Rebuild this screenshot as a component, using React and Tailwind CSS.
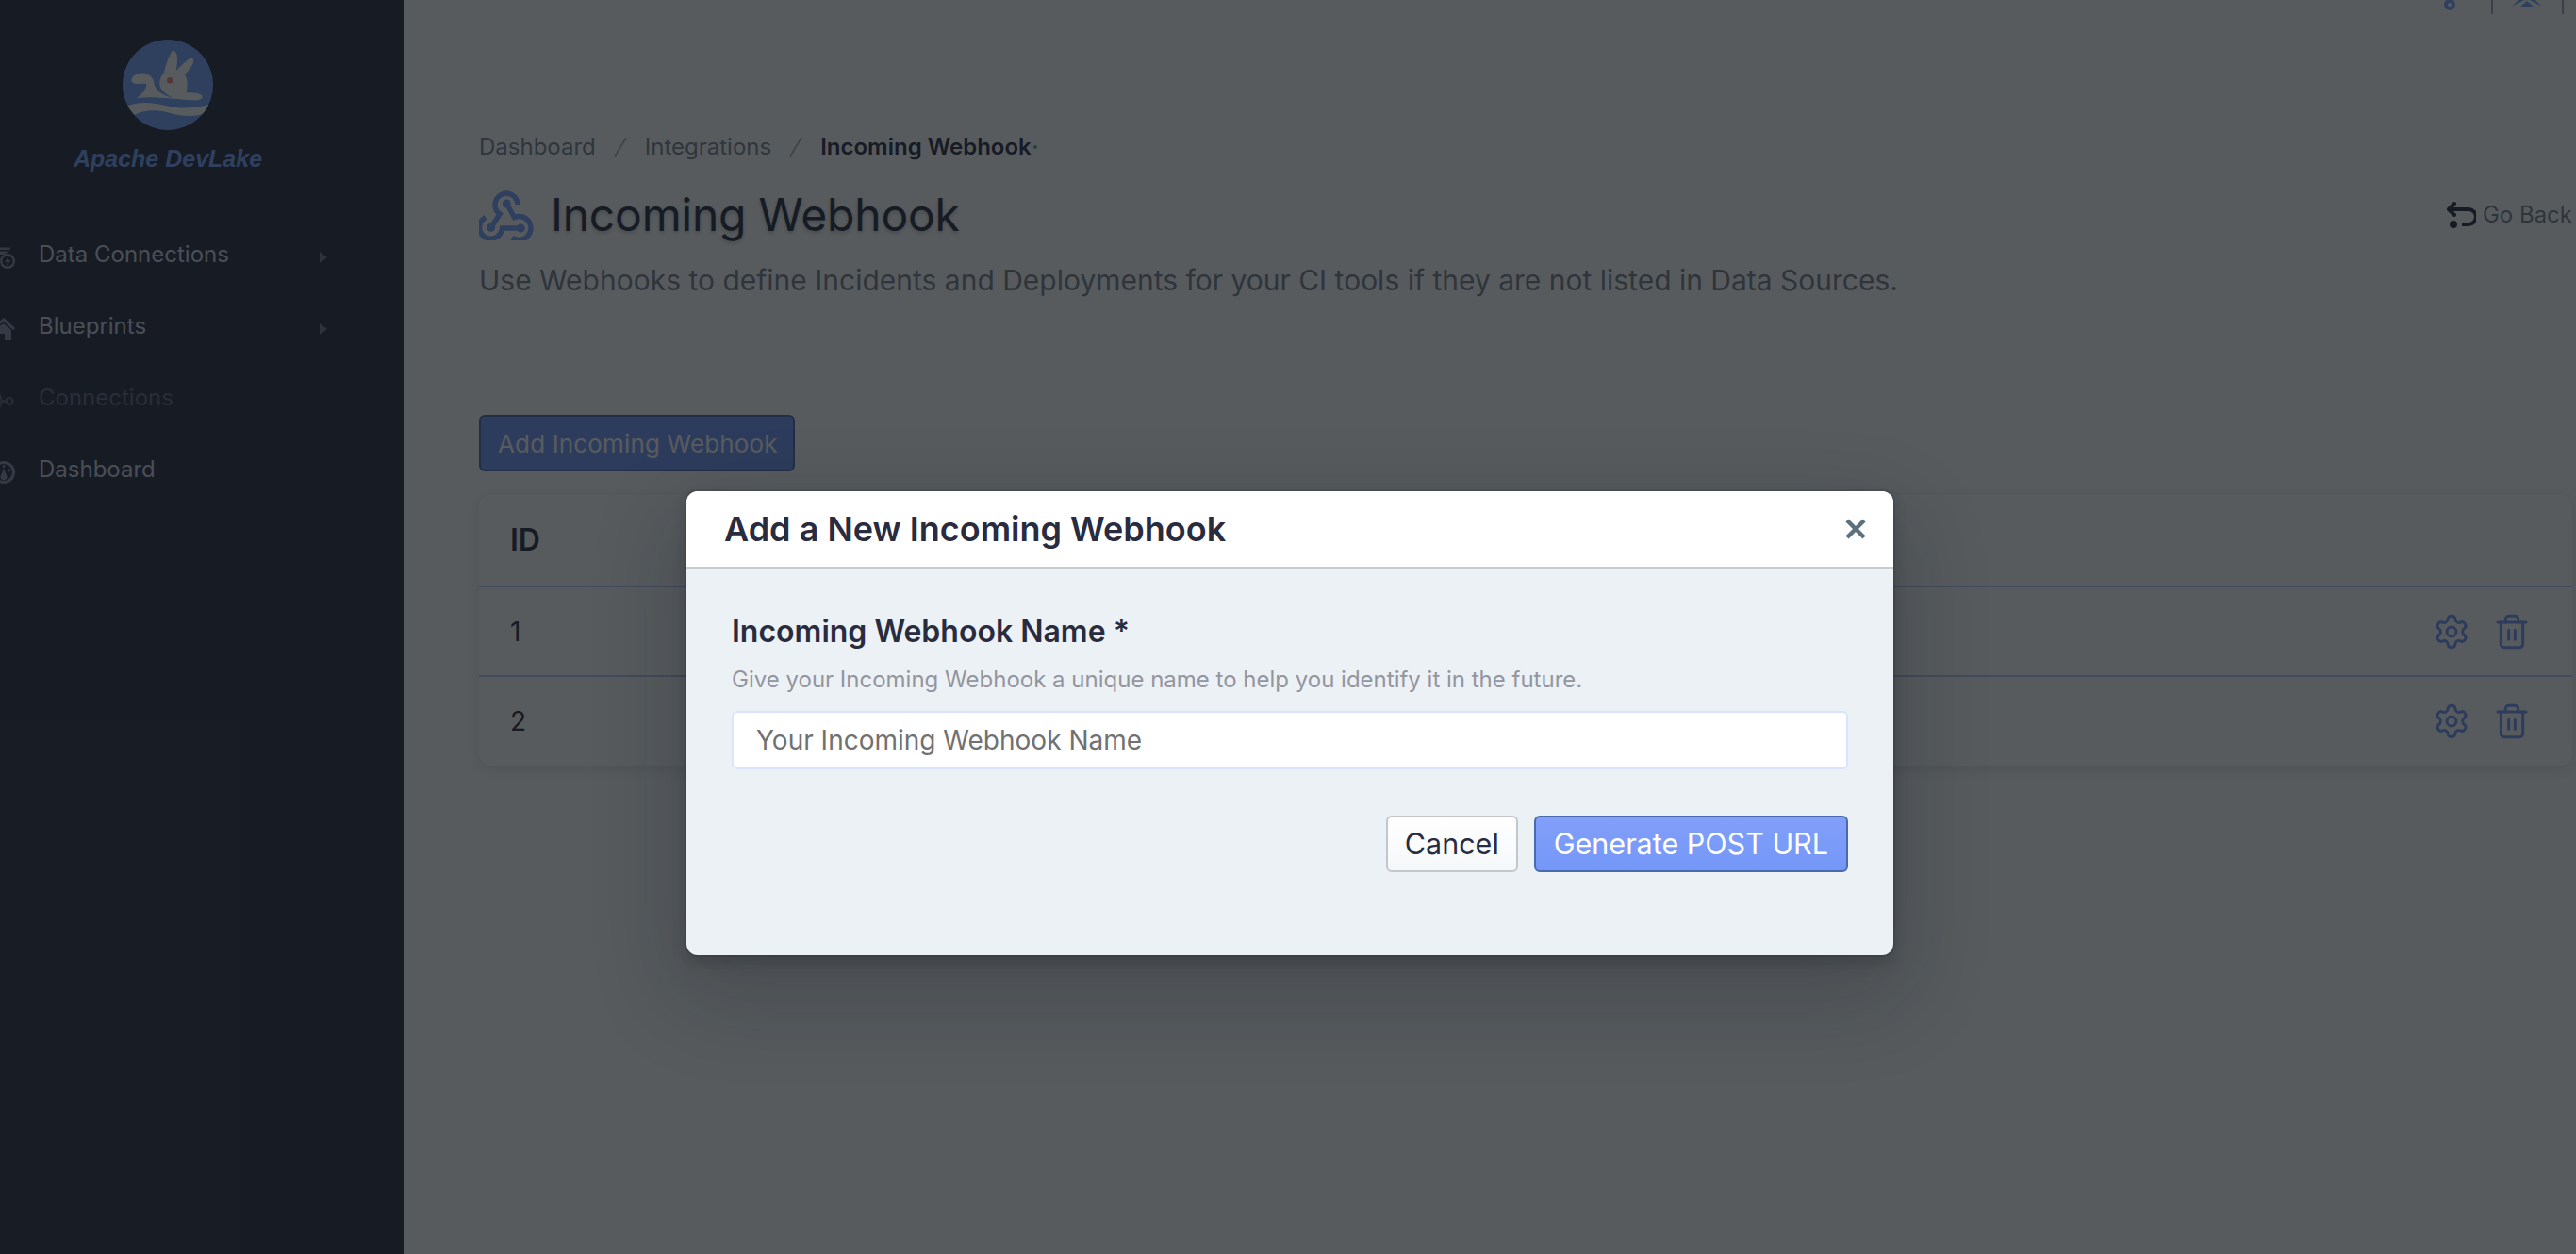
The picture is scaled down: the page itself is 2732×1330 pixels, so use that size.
import React from "react";
import { Settings, Trash2 } from "lucide-react";

const font = { fontFamily: "Inter, 'Liberation Sans', sans-serif" };

function Caret() {
  return (
    <svg width="8" height="12" viewBox="0 0 8 12" className="mt-[6px] shrink-0">
      <path d="M0 0 L8 6 L0 12 Z" fill="currentColor" />
    </svg>
  );
}

function IconData() {
  return (
    <svg width="24" height="24" viewBox="0 0 24 24" className="mt-[6px] shrink-0">
      <path d="M0 1.5h17a2 2 0 0 1 2 2V4H0zM0 5.5h18L12 9H0zM0 10.5h8l-2 4 1 3H0z" fill="currentColor" />
      <circle cx="16" cy="16" r="6.8" fill="none" stroke="currentColor" strokeWidth="2.4" />
      <path d="M17.5 11l-4.5 6h3l-1 4 4.5-6h-3z" fill="currentColor" />
    </svg>
  );
}

function IconHome() {
  return (
    <svg width="24" height="24" viewBox="0 0 24 24" className="mt-[6px] shrink-0">
      <path d="M12 0L24 11l-2 2L12 4 0 13v-3zM2 13l10-7 8 7v11h-7v-7H8v7H2z" fill="currentColor" />
    </svg>
  );
}

function IconLink() {
  return (
    <svg width="24" height="24" viewBox="0 0 24 24" fill="none" stroke="currentColor" strokeWidth="2.4" className="mt-[6px] shrink-0">
      <circle cx="18" cy="12.5" r="3.4" />
      <path d="M14.5 12.5H10L6 2M10 12.5L6 22" />
    </svg>
  );
}

function IconGauge() {
  return (
    <svg width="24" height="24" viewBox="0 0 24 24" className="mt-[6px] shrink-0">
      <circle cx="12" cy="12" r="10.5" fill="none" stroke="currentColor" strokeWidth="3" />
      <path d="M12 8l3 7a3.5 3.5 0 1 1-6 0z" fill="currentColor" />
      <circle cx="6.5" cy="10" r="1.4" fill="currentColor" />
      <circle cx="17.5" cy="10" r="1.4" fill="currentColor" />
      <circle cx="12" cy="5.5" r="1.4" fill="currentColor" />
    </svg>
  );
}

function Logo() {
  return (
    <svg width="96" height="96" viewBox="30 21 288 288">
      <circle cx="174" cy="165" r="144" fill="#7aa3ff" />
      <path
        d="M75 207 C90 195 108 178 106 162 C90 160 72 165 62 158 C52 148 65 130 85 128 C110 125 128 140 130 160 C132 178 150 198 190 206 C165 195 148 180 148 160 C148 145 155 135 162 125 C168 100 178 70 190 55 C205 60 208 80 200 120 C215 105 235 85 250 78 C262 85 255 105 228 132 C238 150 238 175 232 190 C250 190 275 190 283 200 C288 210 270 216 250 214 C200 212 130 200 75 207 Z"
        fill="#ffffff"
      />
      <circle cx="181" cy="151" r="10" fill="#f08888" />
      <path
        d="M47 232 C90 215 130 222 170 232 C215 243 260 240 304 228 C298 240 292 250 284 258 C245 270 205 262 170 252 C135 243 100 245 68 260 C58 250 52 242 47 232 Z"
        fill="#ffffff"
      />
    </svg>
  );
}

function WebhookIcon() {
  return (
    <svg width="58" height="53" viewBox="9 10 58 53" fill="none" stroke="#7aa3ff" strokeWidth="5.5" className="shrink-0">
      <path d="M50 25 A12 12 0 1 0 31 35 L21.7 49.3" />
      <path d="M16 38.5 A12 12 0 1 0 33.5 50 L53.3 50" />
      <path d="M38.3 24 L46.5 38.5 A12.5 12.5 0 1 1 44 60" />
      <circle cx="38.3" cy="24" r="4.5" fill="#7aa3ff" stroke="none" />
      <circle cx="21.7" cy="49.3" r="4.5" fill="#7aa3ff" stroke="none" />
      <circle cx="53.3" cy="50" r="4.5" fill="#7aa3ff" stroke="none" />
    </svg>
  );
}

function GoBackIcon() {
  return (
    <svg width="32" height="28" viewBox="0 0 32 28" fill="none" stroke="#292b3f" strokeWidth="4" className="shrink-0">
      <path d="M9 2L3 8l6 6" strokeLinecap="round" strokeLinejoin="round" />
      <path d="M4 8h20a6.5 6.5 0 0 1 0 16h-7" />
      <circle cx="8" cy="24" r="2" fill="#292b3f" />
    </svg>
  );
}

function Slash() {
  return (
    <svg width="14" height="20" viewBox="0 0 14 20" stroke="#b5b8bf" strokeWidth="2" className="mx-[19px] shrink-0">
      <path d="M13 0L1 20" />
    </svg>
  );
}

const navItems = [
  { label: "Data Connections", icon: <IconData />, caret: true, dim: false },
  { label: "Blueprints", icon: <IconHome />, caret: true, dim: false },
  { label: "Connections", icon: <IconLink />, caret: false, dim: true },
  { label: "Dashboard", icon: <IconGauge />, caret: false, dim: false },
];

function TableRow({ id, height }) {
  return (
    <div className={`flex items-center justify-between border-t-2 border-[#b7c8f5] pl-[33px] pr-[44px] text-[28px] text-[#292b3f] ${height}`}>
      <span>{id}</span>
      <div className="flex gap-[24px] text-[#7497f7]">
        <Settings size={40} strokeWidth={1.8} />
        <Trash2 size={40} strokeWidth={1.8} />
      </div>
    </div>
  );
}

export default function App() {
  return (
    <div className="relative flex min-h-[1330px] w-[2732px] overflow-hidden bg-white" style={font}>
      {/* SIDEBAR */}
      <aside className="flex w-[428px] shrink-0 flex-col bg-[#2b2b3f] pt-[42px]">
        <div className="flex flex-col items-center pr-[72px]">
          <Logo />
          <div className="mt-[12px] text-[25px] leading-[36px] font-bold italic text-[#7aa3ff]" style={{ fontFamily: "'Liberation Sans', sans-serif" }}>
            Apache DevLake
          </div>
        </div>
        <nav className="mt-[46px] flex flex-col pr-[81px]">
          {navItems.map(item => (
            <div
              key={item.label}
              className={`flex h-[76px] items-center gap-[25px] -ml-[8px] text-[24px] ${item.dim ? "text-[#67677b]" : "text-[#d0d4e0]"}`}
            >
              <span className={`flex ${item.dim ? "text-[#5c5e72]" : "text-[#8a8ea3]"}`}>{item.icon}</span>
              <span>{item.label}</span>
              {item.caret && (
                <span className="ml-auto flex text-[#75758a]">
                  <Caret />
                </span>
              )}
            </div>
          ))}
        </nav>
      </aside>

      {/* MAIN */}
      <main className="flex min-w-0 flex-1 flex-col pl-[80px] pr-[4px]">
        <div className="flex h-[15px] justify-end overflow-hidden">
          <div className="flex items-start">
            <div className="mr-[38px] -mt-[1px] h-[12px] w-[12px] rounded-full border-[4px] border-[#7aa3ff]" />
            <div className="mr-[20px] h-[15px] w-[2px] bg-[#a0a3ad]" />
            <svg width="32" height="7" viewBox="0 0 32 7" className="mr-[21px]">
              <path d="M7 0h6L0 7zM25 0h-6L32 7zM16 1l7 6H9z" fill="#7aa3ff" />
            </svg>
            <div className="mr-[9px] h-[15px] w-[2px] bg-[#a0a3ad]" />
          </div>
        </div>

        <div className="mt-[123px] flex items-center text-[24px] leading-[36px] text-[#7b8390]">
          <span>Dashboard</span>
          <Slash />
          <span>Integrations</span>
          <Slash />
          <span className="font-semibold text-[#292b3f]">Incoming Webhook</span>
          <span className="ml-[2px] h-[4px] w-[4px] rounded-full bg-[#4db37a]" />
        </div>

        <div className="mt-[24px] flex h-[60px] items-center justify-between">
          <div className="flex items-center gap-[18px]">
            <WebhookIcon />
            <h1 className="text-[48px] leading-[60px] font-normal tracking-[-0.2px] text-[#292b3f] [text-shadow:0_2px_4px_rgba(0,0,0,0.25)]">
              Incoming Webhook
            </h1>
          </div>
          <div className="flex items-center gap-[7px] text-[24px] text-[#7b8088]">
            <GoBackIcon />
            <span>Go Back</span>
          </div>
        </div>

        <p className="mt-[19px] text-[30px] leading-[40px] text-[#7b8088]">
          Use Webhooks to define Incidents and Deployments for your CI tools if they are not listed in Data Sources.
        </p>

        <div className="mt-[123px] flex">
          <button className="flex h-[60px] w-[335px] items-center whitespace-nowrap rounded-[6px] border-2 border-[#4a6ab0] bg-[#7497f7] px-[18px] text-[26px] tracking-[0.15px] text-white">
            Add Incoming Webhook
          </button>
        </div>

        <div className="mt-[25px] rounded-[12px] bg-white shadow-[0_4px_16px_rgba(0,0,0,0.12)]">
          <div className="flex h-[96px] items-center px-[33px] text-[32px] font-semibold text-[#292b3f]">ID</div>
          <TableRow id="1" height="h-[95px]" />
          <TableRow id="2" height="h-[96px]" />
        </div>
      </main>

      {/* MODAL */}
      <div className="absolute inset-0 flex items-start justify-center bg-[rgba(16,22,26,0.7)] pl-[4px] pt-[521px]">
        <div className="w-[1280px] overflow-hidden rounded-[12px] bg-[#ebf1f5] shadow-[0_0_0_2px_rgba(16,22,26,0.1),0_8px_16px_rgba(16,22,26,0.2),0_36px_92px_12px_rgba(16,22,26,0.2)]">
          <div className="flex h-[82px] items-center justify-between border-b-2 border-[#c8ccd0] bg-white pl-[40px] pr-[29px]">
            <h2 className="text-[36px] font-semibold text-[#292b3f]">Add a New Incoming Webhook</h2>
            <svg width="22" height="22" viewBox="0 0 22 22" stroke="#5c7080" strokeWidth="4.5">
              <path d="M2 2L20 20M20 2L2 20" />
            </svg>
          </div>
          <div className="pl-[48px] pr-[48px] pb-[88px] pt-[47px]">
            <div className="text-[32px] leading-[40px] font-semibold text-[#292b3f]">Incoming Webhook Name *</div>
            <div className="mt-[13px] text-[24px] leading-[36px] text-[#94959f]">
              Give your Incoming Webhook a unique name to help you identify it in the future.
            </div>
            <input
              placeholder="Your Incoming Webhook Name"
              className="mt-[15px] block h-[62px] w-full rounded-[6px] border-2 border-[#dbe4fd] bg-white px-[24px] text-[28px] outline-none placeholder:text-[#717171]"
            />
            <div className="mt-[49px] flex justify-end gap-[17px]">
              <button className="flex h-[60px] items-center rounded-[6px] border-2 border-[#c5c6c9] bg-gradient-to-b from-white to-[#f5f8fa] px-[18px] text-[30.5px] text-[#292b3f]">
                Cancel
              </button>
              <button className="flex h-[60px] items-center rounded-[6px] border-2 border-[#4a6ab0] bg-gradient-to-b from-[#829ffa] to-[#7497f7] px-[19px] text-[30.5px] text-white">
                Generate POST URL
              </button>
            </div>
          </div>
        </div>
      </div>
    </div>
  );
}
